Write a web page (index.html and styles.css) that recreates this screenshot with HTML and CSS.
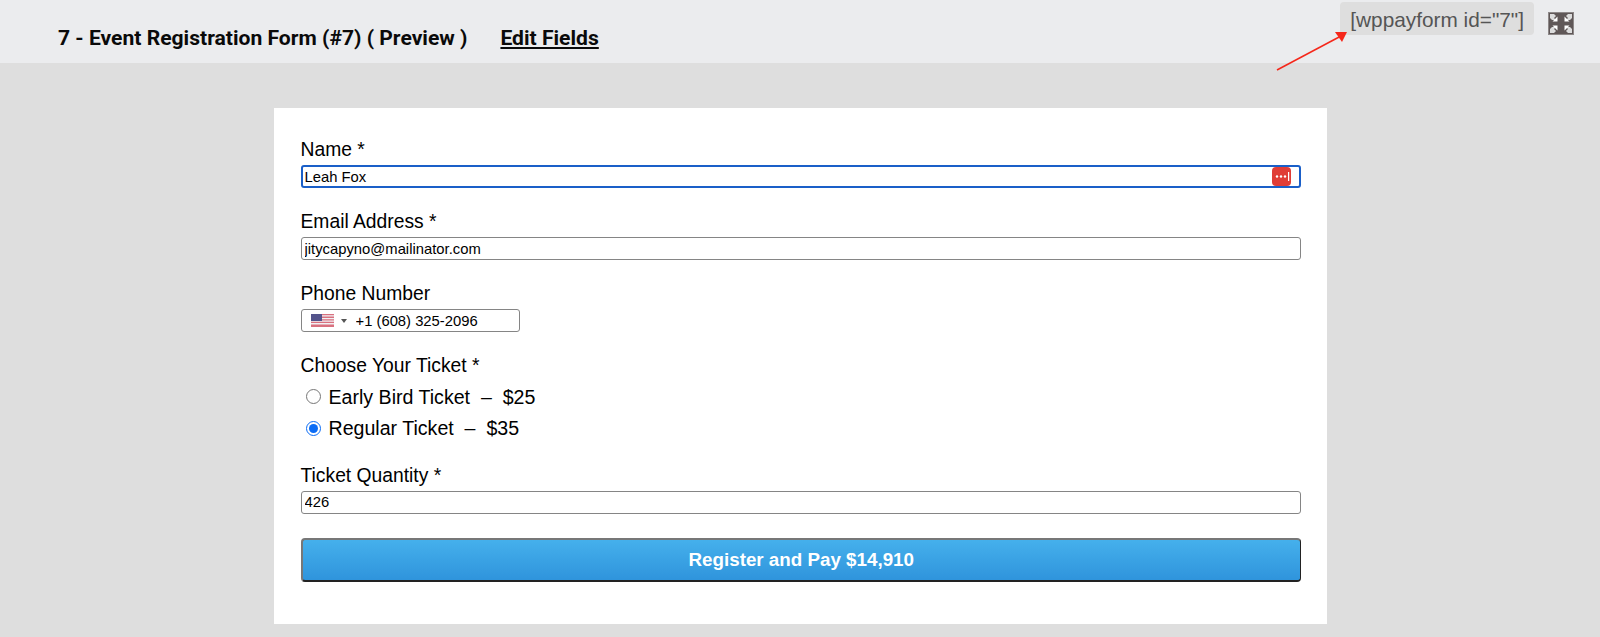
FILE: index.html

```html
<!DOCTYPE html>
<html lang="en">
<head>
  <meta charset="UTF-8">
  <meta name="viewport" content="width=device-width, initial-scale=1.0">
  <title>Event Registration Form Preview</title>
  <link rel="stylesheet" href="styles.css">
</head>
<body>
  <header class="topbar">
    <div class="topbar-title">
      <span class="form-name">7 - Event Registration Form (#7) ( Preview )</span>
      <a class="edit-link" href="#">Edit Fields</a>
    </div>
    <div class="topbar-tools">
      <code class="shortcode">[wppayform id="7"]</code>
      <svg class="fullscreen" width="26" height="23" viewBox="0 0 26 23">
        <rect width="26" height="23" fill="#8d8888"/>
        <rect x="1" y="1" width="24" height="21" fill="#5f5757"/>
        <path d="M2 2h4l2 2-2 2 2 2H4L2 6zM24 2h-4l-2 2 2 2-2 2h4l2-2zM2 21h4l2-2-2-2 2-2H4l-2 2zM24 21h-4l-2-2 2-2-2-2h4l2 2z" fill="#dcdcdc"/>
        <path d="M9.500 9.500V4.500L4.500 9.500zM16.500 9.500V4.500L21.500 9.500zM9.500 13.500V18.500L4.500 13.500zM16.500 13.500V18.500L21.500 13.500z" fill="#fff"/>
      </svg>
    </div>
    <svg class="arrow" width="76" height="44" viewBox="0 0 76 44">
      <path d="M1 42L65 8" stroke="#f5271a" stroke-width="1.500"/>
      <path d="M71 4L59 4L66 14Z" fill="#f5271a"/>
    </svg>
  </header>

  <main class="page">
    <form class="card">
      <div class="field">
        <label for="name">Name *</label>
        <div class="input-wrap">
          <input class="text-input focused" id="name" type="text" value="Leah Fox">
          <svg class="pass-icon" width="19" height="19" viewBox="0 0 19 19">
            <rect width="19" height="19" rx="4" fill="#e03d36"/>
            <circle cx="5" cy="9.500" r="1.200" fill="#fff"/>
            <circle cx="9" cy="9.500" r="1.200" fill="#fff"/>
            <circle cx="13" cy="9.500" r="1.200" fill="#fff"/>
            <rect x="16" y="5" width="1.200" height="9" fill="#fff"/>
          </svg>
        </div>
      </div>
      <div class="field">
        <label for="email">Email Address *</label>
        <input class="text-input" id="email" type="text" value="jitycapyno@mailinator.com">
      </div>
      <div class="field">
        <label for="phone">Phone Number</label>
        <div class="phone-box">
          <svg class="flag" width="23" height="13" viewBox="0 0 23 13">
            <rect width="23" height="13" fill="#f1f1f4"/>
            <path d="M0 0h23v1.300H0zM0 2.600h23v1.300H0zM0 5.200h23v1.300H0zM0 7.800h23v1.300H0zM0 10.400h23V13H0z" fill="#d9717f"/>
            <rect width="11" height="7" fill="#54548c"/>
          </svg>
          <span class="caret"></span>
          <input class="phone-input" id="phone" type="text" value="+1 (608) 325-2096">
        </div>
      </div>
      <div class="field ticket-field">
        <span class="field-label">Choose Your Ticket *</span>
        <label class="radio-row"><input type="radio" name="ticket">Early Bird Ticket &nbsp;–&nbsp; $25</label>
        <label class="radio-row"><input type="radio" name="ticket" checked>Regular Ticket &nbsp;–&nbsp; $35</label>
      </div>
      <div class="field">
        <label for="qty">Ticket Quantity *</label>
        <input class="text-input" id="qty" type="text" value="426">
      </div>
      <button class="submit-btn" type="button">Register and Pay $14,910</button>
    </form>
  </main>
</body>
</html>
```

FILE: styles.css

```css
* {
  box-sizing: border-box;
}
body {
  margin: 0;
  height: 637px;
  overflow: hidden;
  font-family: "Liberation Sans", Arial, sans-serif;
  background-color: #dedede;
  color: #000;
}
.topbar {
  position: relative;
  display: flex;
  justify-content: space-between;
  height: 63px;
  background-color: #ebecee;
  padding: 0 26px 0 58px;
}
.topbar-title {
  display: flex;
  align-items: center;
  gap: 33px;
  padding-top: 11px;
  font-family: Roboto, Arial, sans-serif;
  font-size: 21.100px;
  font-weight: 700;
  color: #0a0a0a;
}
.edit-link {
  color: #0a0a0a;
}
.topbar-tools {
  display: flex;
  align-items: flex-start;
  gap: 14px;
  padding-top: 2px;
}
.shortcode {
  font-family: "Liberation Sans", Arial, sans-serif;
  font-size: 20.800px;
  line-height: 31px;
  color: #555;
  background-color: #dedede;
  border-radius: 4px;
  padding: 2px 10px 0;
}
.fullscreen {
  margin-top: 10px;
}
.arrow {
  position: absolute;
  left: 1276px;
  top: 28px;
}
.page {
  width: 1053px;
  margin: 45px 0 0 274px;
}
.card {
  background-color: #fff;
  height: 516px;
  padding: 30px 26px 0 26.500px;
}
.field {
  margin-bottom: 22px;
}
.field label, .field-label {
  display: block;
  font-size: 19.300px;
  line-height: 24px;
  margin-bottom: 3px;
}
.input-wrap {
  position: relative;
}
.text-input {
  display: block;
  width: 100%;
  height: 23px;
  padding: 0 3px;
  font-family: "Liberation Sans", Arial, sans-serif;
  font-size: 14.800px;
  color: #000;
  background: #fff;
  border: 1px solid #858585;
  border-radius: 3px;
  outline: none;
}
.text-input.focused {
  border: 2px solid #1a5fc8;
  padding: 0 2px;
}
.pass-icon {
  position: absolute;
  right: 10.500px;
  top: 2px;
}
.phone-box {
  display: flex;
  align-items: center;
  width: 219px;
  height: 23px;
  padding-left: 9px;
  border: 1px solid #858585;
  border-radius: 3px;
}
.caret {
  width: 0;
  height: 0;
  margin-left: 7px;
  border-left: 3px solid transparent;
  border-right: 3px solid transparent;
  border-top: 4px solid #555;
}
.phone-input {
  flex: 1;
  min-width: 0;
  margin-left: 9px;
  padding: 0;
  border: none;
  outline: none;
  font-family: "Liberation Sans", Arial, sans-serif;
  font-size: 14.800px;
  color: #000;
}
.ticket-field {
  margin-bottom: 19.500px;
}
.ticket-field .radio-row {
  display: flex;
  align-items: center;
  height: 31.500px;
  margin: 0;
  font-size: 19.600px;
}
.radio-row input {
  width: 15px;
  height: 15px;
  margin: 0 8px 0 5px;
  accent-color: #0b6cf5;
}
.submit-btn {
  display: block;
  width: 100%;
  height: 44px;
  margin-top: 24px;
  background: linear-gradient(#45b0ec, #2f94dc);
  color: #fff;
  font-family: "Liberation Sans", Arial, sans-serif;
  font-size: 18.800px;
  font-weight: 700;
  border-style: solid;
  border-width: 2px 1px 2px 2px;
  border-color: #777 #222 #222 #777;
  border-radius: 4px;
}
```
